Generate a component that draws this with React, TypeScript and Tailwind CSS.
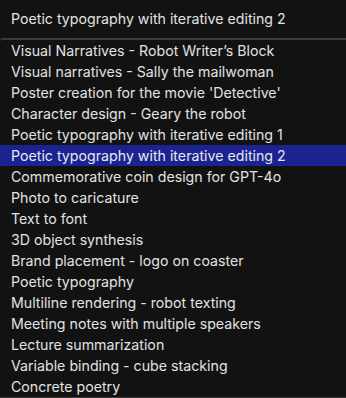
const items = [
  "Visual Narratives - Robot Writer’s Block",
  "Visual narratives - Sally the mailwoman",
  "Poster creation for the movie 'Detective'",
  "Character design - Geary the robot",
  "Poetic typography with iterative editing 1",
  "Poetic typography with iterative editing 2",
  "Commemorative coin design for GPT-4o",
  "Photo to caricature",
  "Text to font",
  "3D object synthesis",
  "Brand placement - logo on coaster",
  "Poetic typography",
  "Multiline rendering - robot texting",
  "Meeting notes with multiple speakers",
  "Lecture summarization",
  "Variable binding - cube stacking",
  "Concrete poetry",
];

export default function App() {
  const selected = "Poetic typography with iterative editing 2";
  return (
    <div className="w-[346px] h-[398px] bg-[#121212] overflow-hidden text-[14.2px] text-[#e2e2e2] font-['Inter',sans-serif]">
      <div className="h-[38px] flex items-center px-[11px]">{selected}</div>
      <div className="border-t-2 border-b border-[#3c3c3c] rounded-tl-[3px] bg-[#121212] h-[360px]">
        {items.map((item) => (
          <div
            key={item}
            className={
              "h-[21px] leading-[21px] px-[11px] whitespace-nowrap " +
              (item === selected ? "bg-[#1b2391] text-[#e8e8f0]" : "")
            }
          >
            {item}
          </div>
        ))}
      </div>
    </div>
  );
}
